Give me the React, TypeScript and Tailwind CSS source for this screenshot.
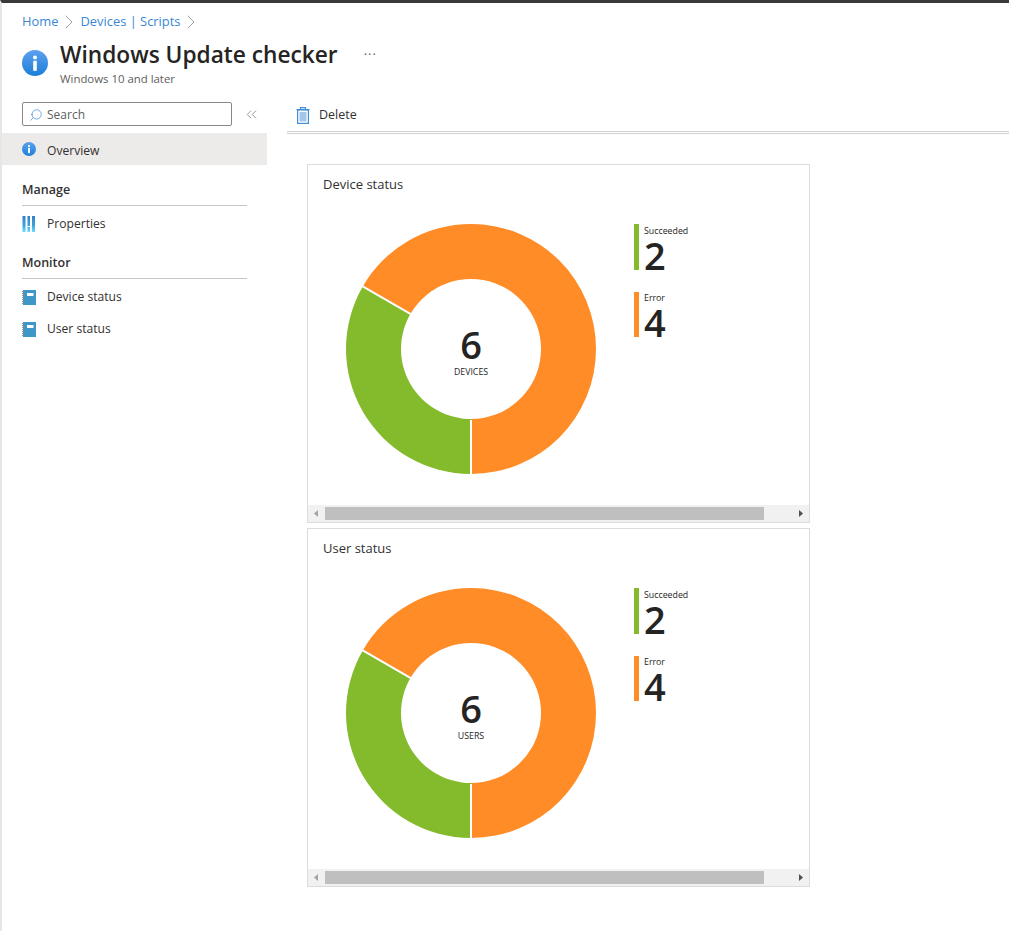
import { ChevronRight, ChevronsLeft, Search } from "lucide-react";

const FONT = "font-['Open_Sans','Noto_Sans',sans-serif]";

function InfoIcon({ size, className }: { size: number; className?: string }) {
  return (
    <svg width={size} height={size} viewBox="0 0 26 26" className={`shrink-0 ${className ?? ""}`}>
      <defs>
        <linearGradient id={`info-${size}`} x1="0" y1="0" x2="0" y2="1">
          <stop offset="0" stopColor="#5ea0ef" />
          <stop offset="1" stopColor="#1a7fd8" />
        </linearGradient>
      </defs>
      <circle cx="13" cy="13" r="13" fill={`url(#info-${size})`} />
      <circle cx="13" cy="7.4" r="2" fill="#fff" />
      <rect x="11.2" y="10.8" width="3.6" height="10" fill="#fff" />
    </svg>
  );
}

function PropertiesIcon() {
  return (
    <svg width="13" height="16" viewBox="0 0 13 16" className="shrink-0">
      <defs>
        <linearGradient id="prop" x1="0" y1="0" x2="0" y2="1">
          <stop offset="0" stopColor="#2f7fc9" />
          <stop offset="0.6" stopColor="#3fa4dc" />
          <stop offset="1" stopColor="#6fdcff" />
        </linearGradient>
      </defs>
      <rect x="0.5" y="0" width="3" height="16" fill="url(#prop)" />
      <rect x="5.5" y="0" width="2.5" height="16" fill="url(#prop)" />
      <rect x="10" y="0" width="3" height="16" fill="url(#prop)" />
      <rect x="5.5" y="10" width="2.5" height="1" fill="#fff" />
    </svg>
  );
}

function BookIcon() {
  return (
    <svg width="14" height="15" viewBox="0 0 14 15" className="shrink-0">
      <rect x="1" y="0" width="13" height="15" fill="#3f97c8" />
      <rect x="5" y="3" width="6.5" height="3" fill="#fff" />
      {[1, 3, 5, 7, 9, 11, 13].map((y) => (
        <rect key={y} x="0" y={y} width="2" height="1" fill="#8c8c8c" />
      ))}
    </svg>
  );
}

function TrashIcon() {
  return (
    <svg width="14" height="17" viewBox="0 0 14 17" className="shrink-0">
      <path d="M4.5 2V.6h5V2M.5 2.6h13" stroke="#3f8fd8" strokeWidth="1.2" fill="none" />
      <rect x="1.6" y="3" width="10.8" height="13.4" fill="#fff" stroke="#3f8fd8" strokeWidth="1.2" />
      <rect x="3.5" y="5" width="7" height="9.5" fill="#a3c6ea" />
    </svg>
  );
}

function NavRow({ icon, label, active }: { icon: React.ReactNode; label: string; active?: boolean }) {
  return (
    <div className={`flex h-8 items-center pl-5 text-[12.1px] text-[#323130] ${active ? "bg-[#edebe9]" : ""}`}>
      <div className="flex w-[25px] items-center">{icon}</div>
      <span className={active ? "pt-[5px]" : ""}>{label}</span>
    </div>
  );
}

function NavHeading({ label, className }: { label: string; className: string }) {
  return (
    <div className={`mx-5 mb-[2px] h-[28px] border-b border-[#c8c6c4] text-[12.5px] leading-[24px] font-semibold text-[#323130] ${className}`}>
      {label}
    </div>
  );
}

function Donut() {
  return (
    <svg width="252" height="252" viewBox="-1 -1 252 252">
      <path
        d="M125 0A125 125 0 1 1 125 250V195A70 70 0 1 0 64.38 90L16.75 62.5A125 125 0 0 1 125 0Z"
        fill="#ff8c27"
      />
      <path
        d="M16.75 62.5A125 125 0 0 0 125 250V195A70 70 0 0 1 64.38 90Z"
        fill="#84bb2c"
      />
      <path d="M125 196V251M64.8 90.2L16.3 62.2" stroke="#fff" strokeWidth="2" fill="none" />
    </svg>
  );
}

function LegendItem({ color, label, value, short }: { color: string; label: string; value: number; short?: boolean }) {
  return (
    <div className={`flex gap-[5px] ${short ? "h-[45px]" : "h-[46px]"}`}>
      <div className={`w-[5px] ${color}`} />
      <div className="text-[#252423]">
        <div className={`h-[12px] text-[8.8px] leading-[12px] ${short ? "" : "pt-[1px]"}`}>{label}</div>
        <div className={`text-[38px] font-semibold ${short ? "leading-[36px]" : "leading-[38px]"}`}>{value}</div>
      </div>
    </div>
  );
}

function StatusCard({ title, unit }: { title: string; unit: string }) {
  return (
    <div className="flex h-[359px] w-[503px] flex-col border border-[#dcdcdc] bg-white">
      <div className="pt-[10px] pl-[15px] text-[13px] leading-[18px] text-[#323130]">{title}</div>
      <div className="flex flex-1 pt-[30px] pl-[37px]">
        <div className="relative h-[252px] w-[252px]">
          <Donut />
          <div className="absolute inset-x-0 top-[96px] text-center text-[#252423]">
            <div className="text-[38px] leading-[50px] font-semibold">6</div>
            <div className="-mt-[3px] text-[8.8px] leading-[12px]">{unit}</div>
          </div>
        </div>
        <div className="ml-[37px] flex flex-col gap-[22px] pt-[1px]">
          <LegendItem color="bg-[#84bb2c]" label="Succeeded" value={2} />
          <LegendItem color="bg-[#ff8c27]" label="Error" value={4} short />
        </div>
      </div>
      <div className="flex h-[17px] items-center bg-[#f1f1f1] px-[6px]">
        <svg width="4" height="7" viewBox="0 0 4 7"><path d="M4 0V7L0 3.5Z" fill="#a3a3a3" /></svg>
        <div className="ml-[7px] h-[13px] w-[439px] bg-[#bfbfbf]" />
        <svg width="4" height="7" viewBox="0 0 4 7" className="ml-auto"><path d="M0 0V7L4 3.5Z" fill="#505050" /></svg>
      </div>
    </div>
  );
}

export default function App() {
  return (
    <div className={`${FONT} h-[931px] w-[1009px] overflow-hidden border-t-[3px] border-l-2 border-t-[#3b3a39] border-l-[#e6e6e6] bg-white`}>
      <div className="flex h-[36px] items-center pt-[1px] pl-5 text-[12.9px] text-[#3a87d6]">
        Home
        <ChevronRight className="mx-[-1px] text-[#8a8886]" size={24} strokeWidth={0.8} />
        Devices | Scripts
        <ChevronRight className="mx-[-1px] text-[#8a8886]" size={24} strokeWidth={0.8} />
      </div>
      <div className="flex h-[50px] items-start pt-[1px] pl-5">
        <InfoIcon size={26} className="mt-[10px]" />
        <div className="ml-3">
          <div className="flex h-[30px] items-center">
            <span className="text-[22.7px] leading-[30px] font-semibold text-[#252423]">Windows Update checker</span>
            <span className="mt-[-2px] ml-[26px] text-[13px] leading-none tracking-[1px] text-[#605e5c]">···</span>
          </div>
          <div className="mt-[2px] text-[11.4px] leading-[14px] text-[#605e5c]">Windows 10 and later</div>
        </div>
      </div>
      <div className="flex">
        <div className="w-[265px] shrink-0 pt-[13px]">
          <div className="mb-[7px] flex items-center pl-5">
            <div className="flex h-6 w-[210px] items-center rounded-[2px] border border-[#8a8886] pt-[1px] pl-[6px] text-[12px] text-[#605e5c]">
              <Search className="mr-[4px] -scale-x-100 text-[#3a87d6]" size={14} strokeWidth={1.2} />
              Search
            </div>
            <ChevronsLeft className="ml-[11px] text-[#6f6d6b]" size={17} strokeWidth={1} />
          </div>
          <NavRow active icon={<InfoIcon size={14} />} label="Overview" />
          <NavHeading label="Manage" className="mt-[13px]" />
          <NavRow icon={<PropertiesIcon />} label="Properties" />
          <NavHeading label="Monitor" className="mt-[11px]" />
          <NavRow icon={<BookIcon />} label="Device status" />
          <NavRow icon={<BookIcon />} label="User status" />
        </div>
        <div className="ml-5 flex-1">
          <div className="mt-[11px] flex h-[34px] items-center border-b-[3px] border-double border-[#d2d0ce] pl-[9px] text-[12.5px] text-[#323130]">
            <TrashIcon />
            <span className="ml-[9px]">Delete</span>
          </div>
          <div className="mt-[30px] ml-5 flex flex-col gap-[5px]">
            <StatusCard title="Device status" unit="DEVICES" />
            <StatusCard title="User status" unit="USERS" />
          </div>
        </div>
      </div>
    </div>
  );
}
